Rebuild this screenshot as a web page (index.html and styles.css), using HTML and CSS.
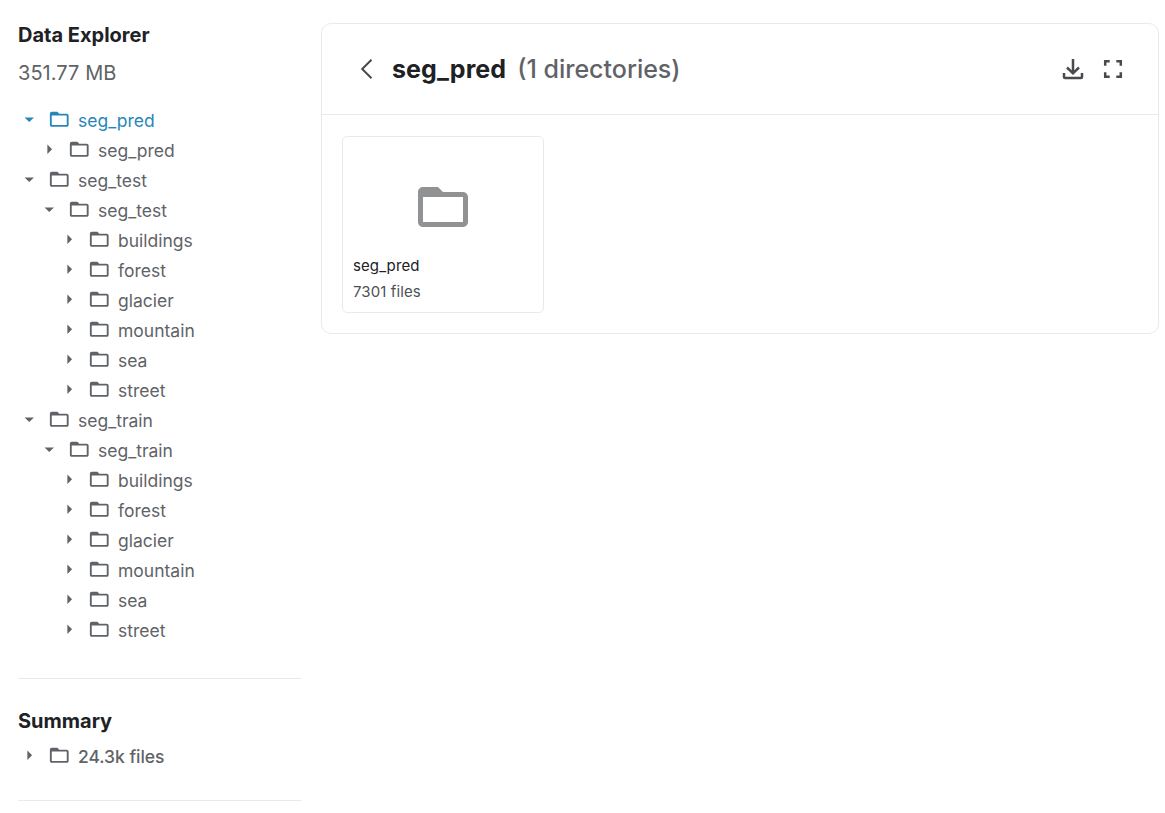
FILE: index.html
```
<!DOCTYPE html>
<html lang="en">
<head>
<meta charset="utf-8">
<title>Data Explorer</title>
<link rel="stylesheet" href="styles.css">
</head>
<body>
<svg class="sprite" aria-hidden="true">
  <symbol id="folder" viewBox="0 0 24 24"><path fill-rule="evenodd" d="M10 4l2 2h8c1.100 0 2 .9 2 2v10c0 1.100-.9 2-2 2H4c-1.100 0-2-.9-2-2V6c0-1.100.9-2 2-2zM4 8v10h16V8z"/></symbol>
  <symbol id="down" viewBox="0 0 24 24"><path d="M7 10l5 5 5-5z"/></symbol>
  <symbol id="right" viewBox="0 0 24 24"><path d="M10 17l5-5-5-5z"/></symbol>
</svg>
<main class="page">
  <aside class="sidebar">
    <h2 class="title">Data Explorer</h2>
    <p class="size">351.77 MB</p>
    <ul class="tree">
      <li class="row active"><svg><use href="#down"/></svg><svg><use href="#folder"/></svg><span>seg_pred</span></li>
      <li class="row l1"><svg><use href="#right"/></svg><svg><use href="#folder"/></svg><span>seg_pred</span></li>
      <li class="row"><svg><use href="#down"/></svg><svg><use href="#folder"/></svg><span>seg_test</span></li>
      <li class="row l1"><svg><use href="#down"/></svg><svg><use href="#folder"/></svg><span>seg_test</span></li>
      <li class="row l2"><svg><use href="#right"/></svg><svg><use href="#folder"/></svg><span>buildings</span></li>
      <li class="row l2"><svg><use href="#right"/></svg><svg><use href="#folder"/></svg><span>forest</span></li>
      <li class="row l2"><svg><use href="#right"/></svg><svg><use href="#folder"/></svg><span>glacier</span></li>
      <li class="row l2"><svg><use href="#right"/></svg><svg><use href="#folder"/></svg><span>mountain</span></li>
      <li class="row l2"><svg><use href="#right"/></svg><svg><use href="#folder"/></svg><span>sea</span></li>
      <li class="row l2"><svg><use href="#right"/></svg><svg><use href="#folder"/></svg><span>street</span></li>
      <li class="row"><svg><use href="#down"/></svg><svg><use href="#folder"/></svg><span>seg_train</span></li>
      <li class="row l1"><svg><use href="#down"/></svg><svg><use href="#folder"/></svg><span>seg_train</span></li>
      <li class="row l2"><svg><use href="#right"/></svg><svg><use href="#folder"/></svg><span>buildings</span></li>
      <li class="row l2"><svg><use href="#right"/></svg><svg><use href="#folder"/></svg><span>forest</span></li>
      <li class="row l2"><svg><use href="#right"/></svg><svg><use href="#folder"/></svg><span>glacier</span></li>
      <li class="row l2"><svg><use href="#right"/></svg><svg><use href="#folder"/></svg><span>mountain</span></li>
      <li class="row l2"><svg><use href="#right"/></svg><svg><use href="#folder"/></svg><span>sea</span></li>
      <li class="row l2"><svg><use href="#right"/></svg><svg><use href="#folder"/></svg><span>street</span></li>
    </ul>
    <section class="summary">
      <h2 class="title">Summary</h2>
      <div class="row total"><svg><use href="#right"/></svg><svg><use href="#folder"/></svg><span>24.3k files</span></div>
    </section>
  </aside>
  <section class="panel">
    <header class="head">
      <svg class="back" viewBox="0 0 14 22"><path d="M11.500 1.700L2.200 11l9.300 9.300"/></svg>
      <h1 class="name">seg_pred</h1>
      <span class="count">(1 directories)</span>
      <svg class="download" viewBox="0 0 22 22"><path d="M11 1v14M5 9.500l6 5.800 6-5.800M2 15v4q0 1 1 1h16q1 0 1-1v-4"/></svg>
      <svg class="expand" viewBox="0 0 20 20"><path d="M2.200 6.700V2.200h4.500M13.300 2.200h4.500v4.500M17.800 13.300v4.500h-4.500M6.700 17.800H2.200v-4.500"/></svg>
    </header>
    <div class="grid">
      <article class="card">
        <svg class="thumb"><use href="#folder"/></svg>
        <p class="dir">seg_pred</p>
        <p class="files">7301 files</p>
      </article>
    </div>
  </section>
</main>
</body>
</html>
```
FILE: styles.css
```
* { box-sizing: border-box; margin: 0; padding: 0; }
body { background: #fff; color: #202124; font-family: Inter, sans-serif; overflow: hidden; }
.sprite { display: none; }
.page { display: flex; align-items: flex-start; gap: 20px; padding: 23px 6px 0 18px; }
.sidebar { width: 283px; flex: none; }
.title { font-size: 20px; line-height: 25px; font-weight: 700; }
.size { margin-top: 12px; font-size: 20px; line-height: 26px; letter-spacing: .05px; color: #5f6368; }
.tree { list-style: none; margin-top: 19px; padding-bottom: 33px; border-bottom: 1px solid #e8eaed; }
.row { display: flex; align-items: center; height: 30px; font-size: 17.5px; line-height: 30px; color: #5f6368; }
.row svg { width: 22.5px; height: 22.5px; margin: 0 7.5px 2.5px 0; fill: currentColor; flex: none; }
.row span { padding-top: 2px; }
.row.active { color: #2787bb; }
.l1 { padding-left: 20px; }
.l2 { padding-left: 40px; }
.summary { padding: 30px 0 29px; border-bottom: 1px solid #e8eaed; }
.total { margin-top: 7px; font-weight: 500; letter-spacing: -.05px; }
.panel { flex: 1; border: 1px solid #e8eaed; border-radius: 10px; }
.head { display: flex; align-items: center; height: 91px; padding: 0 35px 0 38px; border-bottom: 1px solid #e8eaed; }
.head svg { fill: none; stroke: #484a4d; flex: none; }
.back { width: 14px; height: 22px; stroke-width: 2; }
.name { margin-left: 18px; font-size: 25px; line-height: 30px; font-weight: 700; letter-spacing: .1px; }
.count { margin-left: 11px; font-size: 25px; line-height: 30px; font-weight: 500; color: #5f6368; }
.download { width: 22px; height: 22px; margin-left: auto; stroke-width: 2.500; }
.expand { width: 20px; height: 20px; margin-left: 19px; stroke-width: 2.500; }
.grid { display: flex; padding: 21px 20px 20px; }
.card { width: 202px; height: 177px; padding: 40px 10px 0; border: 1px solid #e8eaed; border-radius: 5px; display: flex; flex-direction: column; }
.thumb { width: 60px; height: 60px; align-self: center; fill: #919293; }
.dir { margin-top: 16px; font-size: 15px; line-height: 25px; letter-spacing: .1px; }
.files { margin-top: 1px; font-size: 15px; line-height: 25px; letter-spacing: .1px; color: #4d5156; }
```
